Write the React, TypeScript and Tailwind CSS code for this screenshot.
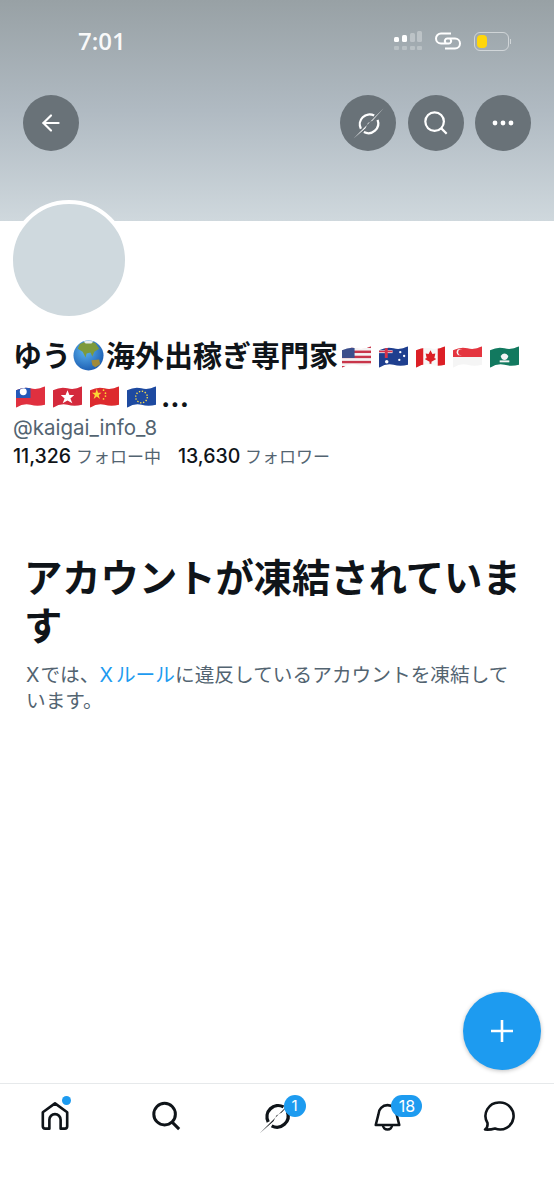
import type { ReactNode } from "react";
import { ArrowLeft } from "lucide-react";

const FONT = "font-['Inter','Noto_Sans_CJK_JP',sans-serif]";

// 絵文字フォントが無いので旗は SVG で描く
function Flag({ id, children, className = "mr-[8px]" }: { id: string; children: ReactNode; className?: string }) {
  return (
    <svg viewBox="0 0 30 24" className={`inline-block w-[29px] h-[24px] align-[-2px] ${className}`}>
      <clipPath id={`wave-${id}`}>
        <path d="M0 5Q8 1 15 3T30 1V20Q22 22 15 20T0 23Z" />
      </clipPath>
      <g clipPath={`url(#wave-${id})`}>{children}</g>
    </svg>
  );
}

function Stripes({ colors }: { colors: string[] }) {
  const h = 24 / colors.length;
  return (
    <>
      {colors.map((c, i) => (
        <rect key={i} x="0" y={i * h} width="30" height={h + 0.2} fill={c} />
      ))}
    </>
  );
}

function Globe() {
  return (
    <svg viewBox="0 0 32 32" className="inline-block w-[31px] h-[31px] align-[-4px] mx-[2px]">
      <defs>
        <radialGradient id="ocean" cx="40%" cy="35%" r="70%">
          <stop offset="0%" stopColor="#5cb4f0" />
          <stop offset="100%" stopColor="#1a5bb0" />
        </radialGradient>
      </defs>
      <circle cx="16" cy="16" r="15.5" fill="url(#ocean)" />
      <path d="M7 4Q14 0 23 3L27 9 22 12 20 17 18 13 14 14 13 18 10 12 5 9Z" fill="#7d9a3c" />
      <path d="M19 21L27 20 28 25 23 28 20 26Z" fill="#a08a3a" />
      <path d="M11 1.500Q16 0 21 1.500L19 3.500H13Z" fill="#e8eef2" />
    </svg>
  );
}

function GrokIcon({ size, stroke, width }: { size: number; stroke: string; width: number }) {
  return (
    <svg width={size} height={size} viewBox="0 0 32 32" fill="none">
      <path d="M21.500 8.300A9.500 9.500 0 0 0 8.600 21" stroke={stroke} strokeWidth={width} />
      <path d="M24.800 12.500A9.500 9.500 0 0 1 11.500 24.300" stroke={stroke} strokeWidth={width} />
      <path d="M30.500 1.500L1.500 30.500 13 20.500 15.500 15.500 20 13Z" fill={stroke} />
    </svg>
  );
}

function RoundButton({ children }: { children: ReactNode }) {
  return (
    <button className="w-[56px] h-[56px] rounded-full bg-[#697278] flex items-center justify-center">
      {children}
    </button>
  );
}

export default function App() {
  return (
    <div className={`relative w-[554px] h-[1200px] flex flex-col bg-white overflow-hidden ${FONT}`}>
      {/* ヘッダー */}
      <div className="h-[221px] shrink-0 bg-gradient-to-b from-[#98a1a5] via-[#b0bac2] to-[#cfd8dd]">
        <div className="h-[38px] mt-[22px] flex items-center pl-[78px] pr-[43px] justify-between">
          <span className="text-[24px] font-semibold text-white/95 font-['Open_Sans',sans-serif]">7:01</span>
          <div className="flex items-center">
            <svg width="29" height="20" viewBox="0 0 29 20">
              <rect x="0" y="6" width="5" height="5" rx="1.500" fill="#fff" />
              <rect x="8" y="4" width="5" height="7" rx="1.500" fill="#fff" />
              <rect x="16" y="2" width="5" height="9" rx="1.500" fill="#fff" fillOpacity="0.3" />
              <rect x="23" y="0" width="5" height="11" rx="1.500" fill="#fff" fillOpacity="0.3" />
              <g fill="#fff" fillOpacity="0.25">
                <rect x="0" y="15" width="5" height="4" rx="1" />
                <rect x="8" y="15" width="5" height="4" rx="1" />
                <rect x="16" y="15" width="5" height="4" rx="1" />
                <rect x="23" y="15" width="5" height="4" rx="1" />
              </g>
            </svg>
            <svg width="28" height="18" viewBox="0 0 28 18" fill="none" stroke="#fff" strokeWidth="2" className="ml-[11px]">
              <path d="M17 1.500H7A5 5 0 0 0 7 11.500H14A2.500 2.500 0 0 0 16 7" />
              <path d="M11 16.500H21A5 5 0 0 0 21 6.500H14A2.500 2.500 0 0 0 12 11" />
            </svg>
            <div className="ml-[12px] flex items-center">
              <div className="w-[35px] h-[19px] rounded-[6px] border border-white/50 p-[2px] flex">
                <div className="w-[10px] h-full rounded-[4px] bg-[#ffd60a]" />
              </div>
              <div className="w-[1.5px] h-[5px] ml-[1px] bg-white/50" />
            </div>
          </div>
        </div>
        <div className="mt-[35px] px-[23px] flex items-center">
          <RoundButton>
            <ArrowLeft size={26} color="#fff" strokeWidth={2} />
          </RoundButton>
          <div className="ml-auto flex gap-[11.5px]">
            <RoundButton>
              <GrokIcon size={33} stroke="#fff" width={2.2} />
            </RoundButton>
            <RoundButton>
              <svg width="26" height="26" viewBox="0 0 28 28" fill="none" stroke="#fff" strokeWidth="2.4">
                <circle cx="12.500" cy="12.500" r="10" />
                <path d="M19.500 19.500L25.500 25.500" />
              </svg>
            </RoundButton>
            <RoundButton>
              <svg width="24" height="6" viewBox="0 0 24 6" fill="#fff">
                <circle cx="4" cy="3" r="2.400" />
                <circle cx="12" cy="3" r="2.400" />
                <circle cx="20" cy="3" r="2.400" />
              </svg>
            </RoundButton>
          </div>
        </div>
      </div>

      {/* アバター */}
      <div className="ml-[9px] -mt-[21px] w-[120px] h-[120px] shrink-0 rounded-full border-[4px] border-white bg-[#cfd9de]" />

      {/* プロフィール */}
      <div className="mt-[17px] pl-[13px] pr-[30px]">
        <h1 className="text-[29px] leading-[40px] font-bold text-[#0f1419]">
          ゆう
          <Globe />
          海外出稼ぎ専門家
          <Flag id="us" className="ml-[4px] mr-[8px]">
            <Stripes colors={["#c8354a", "#f4f4f4", "#c8354a", "#f4f4f4", "#c8354a", "#f4f4f4", "#c8354a", "#f4f4f4", "#c8354a"]} />
            <rect x="0" y="0" width="13" height="13" fill="#3b4f8c" />
          </Flag>
          <Flag id="au">
            <rect x="0" y="0" width="30" height="24" fill="#1f3f8f" />
            <rect x="0" y="5" width="14" height="3" fill="#e8e8ee" />
            <rect x="6" y="0" width="3" height="13" fill="#d8334a" />
            <rect x="0" y="5.500" width="14" height="1.600" fill="#d8334a" />
            <circle cx="22" cy="7" r="1.200" fill="#fff" />
            <circle cx="26" cy="11" r="1.200" fill="#fff" />
            <circle cx="21" cy="15" r="1.200" fill="#fff" />
            <circle cx="8" cy="17" r="1.800" fill="#fff" />
          </Flag>
          <Flag id="ca">
            <rect x="0" y="0" width="30" height="24" fill="#f7f7f7" />
            <rect x="0" y="0" width="7.500" height="24" fill="#dc1f26" />
            <rect x="22.500" y="0" width="7.500" height="24" fill="#dc1f26" />
            <path d="M15 5L17 9 20 8.500 19 13 21 14 16 17V19H14V17L9 14 11 13 10 8.500 13 9Z" fill="#dc1f26" />
          </Flag>
          <Flag id="sg">
            <rect x="0" y="0" width="30" height="24" fill="#f5f5f5" />
            <rect x="0" y="0" width="30" height="12" fill="#e4353f" />
            <circle cx="7" cy="7" r="3.200" fill="#f5f5f5" />
            <circle cx="8.400" cy="7" r="3" fill="#e4353f" />
          </Flag>
          <Flag id="mo" className="">
            <rect x="0" y="0" width="30" height="24" fill="#12795f" />
            <path d="M11 11Q15 6 19 11 18 15 15 15 12 15 11 11Z" fill="#f4f4f4" />
            <rect x="10" y="15.500" width="10" height="2" fill="#f4f4f4" />
          </Flag>
          <Flag id="tw" className="ml-[3px] mr-[8px]">
            <rect x="0" y="0" width="30" height="24" fill="#e0303f" />
            <rect x="0" y="0" width="15" height="13" fill="#2458b8" />
            <circle cx="7.500" cy="6.500" r="3.600" fill="#fff" />
          </Flag>
          <Flag id="hk">
            <rect x="0" y="0" width="30" height="24" fill="#d42a3c" />
            <path d="M15 5L17 10 22 10 18 13.500 20 18.500 15 15.500 10 18.500 12 13.500 8 10 13 10Z" fill="#fff" />
          </Flag>
          <Flag id="cn">
            <rect x="0" y="0" width="30" height="24" fill="#dd2a2e" />
            <path d="M7 3.500L8.300 7.500 12 7.600 9 10 10.200 14 7 11.500 3.800 14 5 10 2 7.600 5.700 7.500Z" fill="#fbd535" />
            <circle cx="14" cy="5" r="0.900" fill="#fbd535" />
            <circle cx="16" cy="8" r="0.900" fill="#fbd535" />
            <circle cx="16" cy="11" r="0.900" fill="#fbd535" />
            <circle cx="14" cy="14" r="0.900" fill="#fbd535" />
          </Flag>
          <Flag id="eu" className="">
            <rect x="0" y="0" width="30" height="24" fill="#1e4aa0" />
            <circle cx="15" cy="12" r="6" fill="none" stroke="#f6d84a" strokeWidth="1.400" strokeDasharray="1.400 1.700" />
          </Flag>
          <span className="ml-[5px] text-[28px]">...</span>
        </h1>
        <div className="-mt-[2px] text-[20.5px] leading-[26px] text-[#536471]">@kaigai_info_8</div>
        <div className="mt-[2px] flex items-center gap-[17px] text-[17px] leading-[26px] text-[#536471]">
          <span>
            <span className="font-medium text-[19.5px] text-[#0f1419]">11,326</span> フォロー中
          </span>
          <span>
            <span className="font-medium text-[19.5px] text-[#0f1419]">13,630</span> フォロワー
          </span>
        </div>
      </div>

      {/* 凍結メッセージ */}
      <div className="mt-[84px] pl-[26px] pr-[29px]">
        <h2 className="-ml-[2px] text-[38.3px] leading-[48px] font-bold text-[#0f1419]">アカウントが凍結されています</h2>
        <p className="mt-[12px] text-[19.7px] leading-[26px] text-[#536471]">
          <span className="mr-[1px]">X</span>では、
          <span className="text-[#1d9bf0]">
            <span className="mr-[3px]">X</span>ルール
          </span>
          に違反しているアカウントを凍結しています。
        </p>
      </div>

      <div className="flex-1" />

      {/* FAB */}
      <button className="absolute left-[463px] top-[992px] w-[78px] h-[78px] rounded-full bg-[#1d9bf0] shadow-[0_1px_4px_rgba(0,0,0,0.25)] flex items-center justify-center">
        <svg width="26" height="26" viewBox="0 0 26 26" stroke="#fff" strokeWidth="2.600">
          <path d="M13 2V24M2 13H24" />
        </svg>
      </button>

      {/* ボトムナビ */}
      <nav className="h-[117px] shrink-0 border-t border-[#e6e9eb] grid grid-cols-5 items-start pt-[17px]">
        <div className="relative flex justify-center">
          <svg width="30" height="30" viewBox="0 0 32 32" fill="none" stroke="#0f1419" strokeWidth="2.800" strokeLinejoin="round">
            <path d="M16 2.500L29 12V27Q29 29.500 26.500 29.500H22V20A6 6 0 0 0 10 20V29.500H5.500Q3 29.500 3 27V12Z" />
          </svg>
          <span className="absolute left-[62px] -top-[5px] w-[9px] h-[9px] rounded-full bg-[#1d9bf0]" />
        </div>
        <div className="flex justify-center">
          <svg width="30" height="30" viewBox="0 0 32 32" fill="none" stroke="#0f1419" strokeWidth="3.200">
            <circle cx="14.500" cy="14" r="11.500" />
            <path d="M22.500 22.500L30 30" />
          </svg>
        </div>
        <div className="relative flex justify-center h-[30px] items-center">
          <GrokIcon size={38} stroke="#0f1419" width={2.800} />
          <span className="absolute left-[62px] -top-[6px] w-[22px] h-[22px] rounded-full bg-[#1d9bf0] text-white text-[15px] leading-[22px] text-center">1</span>
        </div>
        <div className="relative flex justify-center">
          <svg width="29" height="30" viewBox="0 0 32 32" fill="none" stroke="#0f1419" strokeWidth="2.800" strokeLinejoin="round">
            <path d="M6 14A10 10 0 0 1 26 14L29 26H3Z" />
            <path d="M11 26A5 5 0 0 0 21 26" />
          </svg>
          <span className="absolute left-[59px] -top-[6px] w-[31px] h-[22px] rounded-full bg-[#1d9bf0] text-white text-[16px] leading-[22px] text-center">18</span>
        </div>
        <div className="flex justify-center">
          <svg width="32" height="30" viewBox="0 0 32 30" fill="none" stroke="#0f1419" strokeWidth="2.600" strokeLinejoin="round">
            <path d="M16.500 1.500A13.500 13.500 0 1 1 12 27.500Q7 29 2 28.500 5 26.500 4.500 22A13.500 13.500 0 0 1 16.500 1.500Z" />
          </svg>
        </div>
      </nav>
    </div>
  );
}
